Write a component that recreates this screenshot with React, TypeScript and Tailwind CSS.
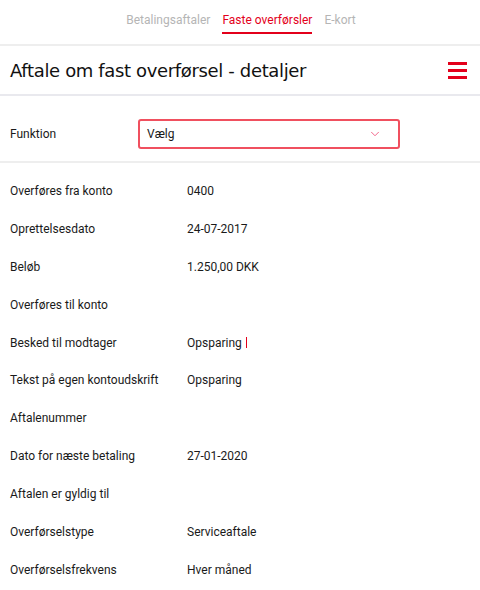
import { ChevronDown } from "lucide-react";

const rows: { label: string; value?: string; cursor?: boolean }[] = [
  { label: "Overføres fra konto", value: "0400" },
  { label: "Oprettelsesdato", value: "24-07-2017" },
  { label: "Beløb", value: "1.250,00 DKK" },
  { label: "Overføres til konto" },
  { label: "Besked til modtager", value: "Opsparing", cursor: true },
  { label: "Tekst på egen kontoudskrift", value: "Opsparing" },
  { label: "Aftalenummer" },
  { label: "Dato for næste betaling", value: "27-01-2020" },
  { label: "Aftalen er gyldig til" },
  { label: "Overførselstype", value: "Serviceaftale" },
  { label: "Overførselsfrekvens", value: "Hver måned" },
];

export default function App() {
  return (
    <div className="w-[480px] h-[590px] bg-white overflow-hidden font-['Roboto',sans-serif] text-[#1a1a1a]">
      {/* faner */}
      <div className="h-[46px] flex justify-center gap-[12px] pt-[11px] text-[12px] border-b-2 border-[#eeeeee]">
        <span className="text-[#b5b5b5] pl-[2px]">Betalingsaftaler</span>
        <span className="text-[#e3001b] h-[23px] border-b-2 border-[#e3001b]">Faste overførsler</span>
        <span className="text-[#b5b5b5]">E-kort</span>
      </div>

      {/* titel */}
      <div className="h-[50px] flex items-center justify-between pl-[10px] pr-[13px] border-b-2 border-[#e9e9ee]">
        <h1 className="text-[18px] font-medium font-['DejaVu_Sans',sans-serif] tracking-[-0.35px] text-[#111]">
          Aftale om fast overførsel - detaljer
        </h1>
        <div className="flex flex-col gap-[4px] w-[19px]">
          <span className="h-[3px] bg-[#e3001b]" />
          <span className="h-[3px] bg-[#e3001b]" />
          <span className="h-[3px] bg-[#e3001b]" />
        </div>
      </div>

      {/* funktion */}
      <div className="h-[67px] flex items-start pt-[23px] pl-[10px] border-b-2 border-[#eeeeee]">
        <span className="w-[128px] text-[12px] leading-[30px]">Funktion</span>
        <div className="w-[262px] h-[30px] rounded-[3px] border-2 border-[#f0505f] flex items-center justify-between pl-[7px] pr-[16px] text-[12px]">
          <span>Vælg</span>
          <ChevronDown className="w-[14px] h-[14px] text-[#f0507a]" strokeWidth={1.5} />
        </div>
      </div>

      {/* detaljer */}
      <div className="pt-[19px] pl-[10px] text-[12px]">
        {rows.map((r) => (
          <div key={r.label} className="h-[37.9px] flex">
            <span className="w-[177px]">{r.label}</span>
            {r.value && (
              <span className="flex items-start">
                {r.value}
                {r.cursor && <span className="ml-[4px] mt-[3px] w-[1px] h-[11px] bg-[#e3001b]" />}
              </span>
            )}
          </div>
        ))}
      </div>
    </div>
  );
}
